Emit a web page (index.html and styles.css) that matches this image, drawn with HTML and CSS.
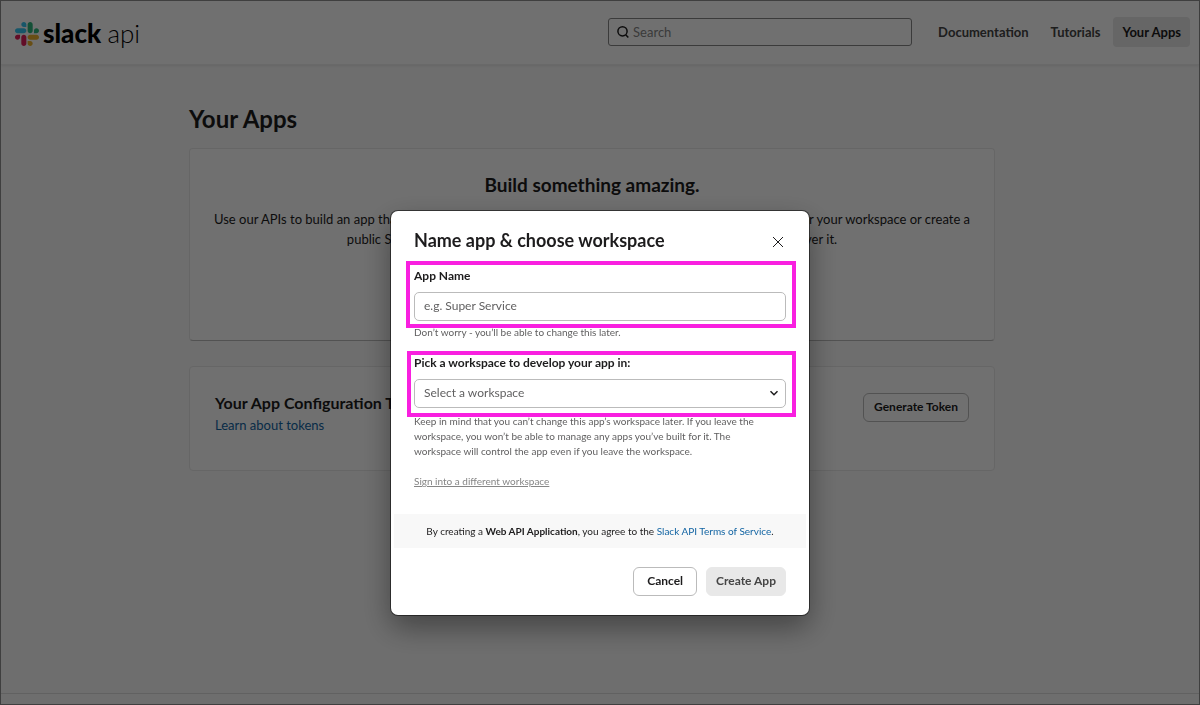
FILE: index.html
```html
<!DOCTYPE html>
<html lang="en">
<head>
<meta charset="utf-8">
<meta name="viewport" content="width=device-width, initial-scale=1">
<title>Slack API: Applications</title>
<link rel="stylesheet" href="styles.css">
</head>
<body>
<div class="page">
  <header class="header">
    <a class="logo" href="#">
      <svg class="logo-mark" viewBox="0 0 122.8 122.8" aria-hidden="true">
        <path fill="#e01e5a" d="M25.8 77.6c0 7.1-5.8 12.9-12.9 12.9S0 84.7 0 77.6s5.8-12.9 12.9-12.9h12.9v12.9zm6.5 0c0-7.1 5.8-12.9 12.9-12.9s12.9 5.8 12.9 12.9v32.3c0 7.1-5.8 12.9-12.9 12.9s-12.9-5.8-12.9-12.9V77.6z"/>
        <path fill="#36c5f0" d="M45.2 25.8c-7.1 0-12.9-5.8-12.9-12.9S38.1 0 45.2 0s12.9 5.8 12.9 12.9v12.9H45.2zm0 6.5c7.1 0 12.9 5.8 12.9 12.9s-5.8 12.9-12.9 12.9H12.9C5.8 58.1 0 52.3 0 45.2s5.8-12.9 12.9-12.9h32.3z"/>
        <path fill="#2eb67d" d="M97 45.2c0-7.1 5.8-12.9 12.9-12.9s12.9 5.8 12.9 12.9-5.8 12.9-12.9 12.9H97V45.2zm-6.5 0c0 7.1-5.8 12.9-12.9 12.9s-12.9-5.8-12.9-12.9V12.9C64.7 5.8 70.5 0 77.6 0s12.9 5.8 12.9 12.9v32.3z"/>
        <path fill="#ecb22e" d="M77.6 97c7.1 0 12.9 5.8 12.9 12.9s-5.8 12.9-12.9 12.9-12.9-5.8-12.9-12.9V97h12.9zm0-6.5c-7.1 0-12.9-5.8-12.9-12.9s5.8-12.9 12.9-12.9h32.3c7.1 0 12.9 5.8 12.9 12.9s-5.8 12.9-12.9 12.9H77.6z"/>
      </svg>
      <span class="logo-name">slack <span class="logo-sub">api</span></span>
    </a>
    <label class="search">
      <svg class="search-icon" viewBox="0 0 14 14" aria-hidden="true"><circle cx="6.5" cy="6.3" r="4.6"/><path d="M9.7 9.7 12.3 12.6"/></svg>
      <input class="search-input" type="search" placeholder="Search" aria-label="Search">
    </label>
    <nav class="nav">
      <a class="nav-link" href="#">Documentation</a>
      <a class="nav-link" href="#">Tutorials</a>
      <a class="nav-link nav-link-active" href="#">Your Apps</a>
    </nav>
  </header>
  <main class="main">
    <div class="content">
      <h1 class="page-title">Your Apps</h1>
      <section class="card intro">
        <h2 class="intro-title">Build something amazing.</h2>
        <p class="intro-text">Use our APIs to build an app that makes people’s working lives better. You can create an app that’s just for your workspace or create a<br>public Slack App to list in the App Directory, where everybody on Slack can discover it.</p>
      </section>
      <section class="card tokens">
        <div>
          <h2 class="tokens-title">Your App Configuration Tokens</h2>
          <a class="link tokens-link" href="#">Learn about tokens</a>
        </div>
        <button class="button" type="button">Generate Token</button>
      </section>
    </div>
  </main>
  <footer class="footer"></footer>
</div>
<div class="backdrop">
  <form class="modal" role="dialog" aria-modal="true" aria-labelledby="modal-title">
    <div class="modal-head">
      <h2 class="modal-title" id="modal-title">Name app &amp; choose workspace</h2>
      <button class="close" type="button" aria-label="Close"><svg class="close-icon" viewBox="0 0 12 12" aria-hidden="true"><path d="M1 1 11 11M11 1 1 11"/></svg></button>
    </div>
    <div class="field">
      <label class="label" for="app-name">App Name</label>
      <input class="control" id="app-name" type="text" placeholder="e.g. Super Service">
    </div>
    <p class="hint">Don’t worry - you’ll be able to change this later.</p>
    <div class="field field-next">
      <label class="label" for="workspace">Pick a workspace to develop your app in:</label>
      <div class="select-wrap">
        <select class="control" id="workspace"><option>Select a workspace</option></select>
        <svg class="chevron" viewBox="0 0 10 10" aria-hidden="true"><path d="M1.5 3.3 5 6.7 8.5 3.3"/></svg>
      </div>
    </div>
    <p class="hint">Keep in mind that you can’t change this app’s workspace later. If you leave the<br>workspace, you won’t be able to manage any apps you’ve built for it. The<br>workspace will control the app even if you leave the workspace.</p>
    <a class="signin" href="#">Sign into a different workspace</a>
    <p class="terms">By creating a <strong>Web API Application</strong>, you agree to the <a class="link" href="#">Slack API Terms of Service</a>.</p>
    <div class="actions">
      <button class="button button-wide" type="button">Cancel</button>
      <button class="button button-muted" type="submit">Create App</button>
    </div>
  </form>
</div>
</body>
</html>
```

FILE: styles.css
```css
* { box-sizing: border-box; }
body {
  margin: 0;
  font: 13px/20px Lato, "Liberation Sans", sans-serif;
  color: #1d1c1d;
}
h1, h2, p { margin: 0; }
input, select, button { font: inherit; color: inherit; }
.link { color: #1264a3; text-decoration: none; }

.page {
  display: flex;
  flex-direction: column;
  min-height: 100vh;
  background: #fafafa;
  border: 1px solid #909090;
}
.header {
  display: flex;
  align-items: center;
  height: 64px;
  padding: 0 9px 2px 14px;
  background: #fff;
  border-bottom: 1px solid #eee;
  box-shadow: 0 1px 2px rgba(0, 0, 0, .08);
}
.logo {
  display: flex;
  align-items: center;
  gap: 4px;
  margin-right: auto;
  padding-top: 4px;
  color: #000;
  text-decoration: none;
}
.logo-mark { width: 24px; height: 24px; }
.logo-name { padding-bottom: 2px; font-size: 26px; line-height: 28px; font-weight: 900; }
.logo-sub { font-weight: 300; }
.search {
  display: flex;
  align-items: center;
  gap: 3px;
  width: 304px;
  height: 28px;
  padding: 0 7px;
  border: 1px solid #868686;
  border-radius: 3px;
}
.search-icon {
  width: 14px;
  height: 14px;
  fill: none;
  stroke: #1d1c1d;
  stroke-width: 1.5;
}
.search-input {
  flex: 1;
  min-width: 0;
  padding: 0;
  border: 0;
  outline: 0;
  background: transparent;
}
.search-input::placeholder { color: #868686; opacity: 1; }
.nav { display: flex; gap: 4px; margin-left: 17px; }
.nav-link {
  padding: 5px 9px;
  border-radius: 4px;
  font-weight: 700;
  color: #454545;
  text-decoration: none;
}
.nav-link-active { background: #e8e8e8; color: #1d1c1d; }

.main { flex: 1; padding: 38px 16px 0 0; }
.content { max-width: 806px; margin: 0 auto; }
.page-title { font-size: 24px; line-height: 32px; }
.card {
  background: #fff;
  border: 1px solid #e8e8e8;
  border-radius: 4px;
}
.intro {
  min-height: 193px;
  margin-top: 13px;
  padding: 24px 20px 0;
  border-bottom-color: #bbb;
  text-align: center;
}
.intro-title { font-size: 19px; line-height: 24px; }
.intro-text { margin-top: 12px; }
.tokens {
  display: flex;
  justify-content: space-between;
  align-items: flex-start;
  min-height: 105px;
  margin-top: 25px;
  padding: 26px 25px 24px;
}
.tokens-title { font-size: 16px; line-height: 20px; }
.tokens-link { display: block; margin-top: 2px; }
.footer { height: 11px; border-top: 1px solid #ddd; }

.button {
  height: 29px;
  padding: 0 10px 1px;
  border: 1px solid #bbb;
  border-radius: 6px;
  background: #fff;
  font-size: 12px;
  line-height: 16px;
  font-weight: 700;
}
.button-wide { padding: 0 13px 1px; }
.button-muted { padding: 0 9px 1px; border-color: #e8e8e8; background: #e8e8e8; color: #454545; }

.backdrop {
  position: fixed;
  inset: 0;
  display: flex;
  align-items: flex-start;
  justify-content: center;
  padding-top: 211px;
  background: rgba(0, 0, 0, .56);
}
.modal {
  width: 418px;
  padding: 17px 3px 19px;
  border-radius: 7px;
  background: #fff;
  box-shadow: 0 0 0 1px rgba(0, 0, 0, .5), 0 12px 30px rgba(0, 0, 0, .4);
}
.modal-head, .field, .hint, .signin, .actions { margin-left: 20px; margin-right: 20px; }
.modal-head {
  display: flex;
  justify-content: space-between;
  align-items: center;
}
.modal-title { font-size: 18px; line-height: 24px; }
.close {
  display: grid;
  place-items: center;
  width: 16px;
  height: 16px;
  padding: 3px 0 0;
  border: 0;
  background: none;
}
.close-icon { width: 12px; height: 12px; fill: none; stroke: #1d1c1d; stroke-width: 1; }
.field { position: relative; margin-top: 16px; }
/* highlight frame around the control group */
.field::after {
  content: "";
  position: absolute;
  inset: -7px -10px -7px -8px;
  border: 4px solid #f91fe0;
  pointer-events: none;
}
.field-next { margin-top: 15px; }
.field-next::after { inset: -4px -10px -9px -7px; }
.label { display: block; font-size: 12px; line-height: 16px; font-weight: 700; }
.control {
  display: block;
  width: 100%;
  height: 29px;
  margin-top: 8px;
  padding: 0 9px 2px;
  border: 1px solid #bbb;
  border-radius: 5px;
  outline: 0;
  appearance: none;
  background: #fff;
  font-size: 12px;
  color: #616061;
}
.control::placeholder { color: #616061; opacity: 1; }
.select-wrap { position: relative; }
.chevron {
  position: absolute;
  right: 7px;
  top: 9px;
  width: 10px;
  height: 10px;
  fill: none;
  stroke: #1d1c1d;
  stroke-width: 1.5;
}
.hint { margin-top: 4px; font-size: 10px; line-height: 15px; color: #616061; }
.field-next + .hint { margin-top: 6px; }
.signin {
  display: block;
  margin-top: 15px;
  font-size: 10px;
  line-height: 15px;
  color: #868686;
}
.terms {
  margin-top: 25px;
  padding: 10px 20px 9px;
  background: #f8f8f8;
  font-size: 10px;
  line-height: 15px;
  text-align: center;
}
.actions { display: flex; justify-content: flex-end; gap: 9px; margin-top: 19px; }
```
